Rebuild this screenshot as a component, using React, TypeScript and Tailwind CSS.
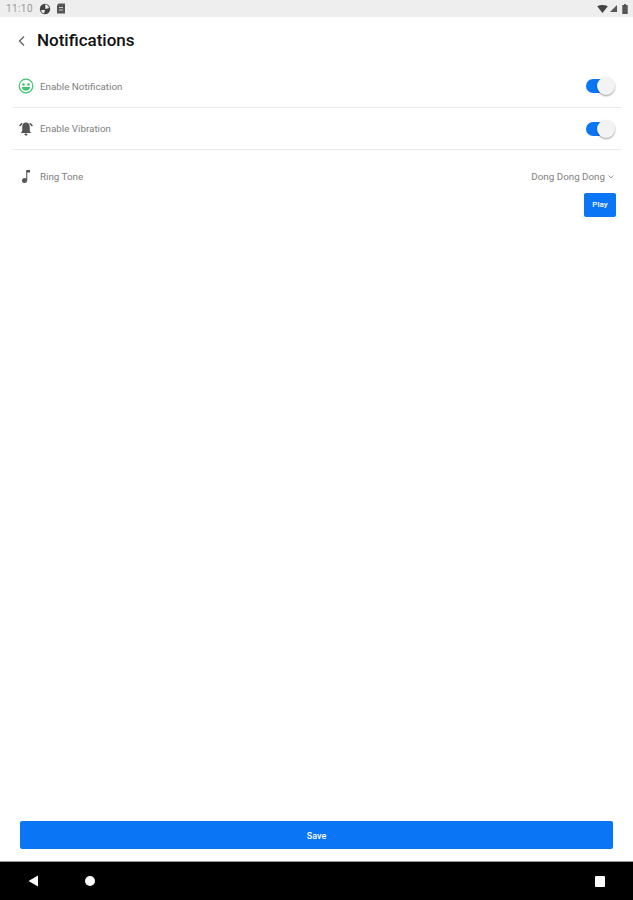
import React from "react";

const Toggle = () => (
  <div className="relative w-[29px] h-[14px]">
    <div className="absolute left-0 top-0 w-[24px] h-[14px] rounded-full bg-[#0a76f6]" />
    <div className="absolute right-0 top-[-2px] w-[18px] h-[18px] rounded-full bg-[#f3f3f3] shadow-[0_1px_2px_rgba(0,0,0,0.4)]" />
  </div>
);

const App = () => {
  return (
    <div className="w-[633px] h-[900px] flex flex-col bg-white font-['Roboto',sans-serif] overflow-hidden">
      {/* Status bar */}
      <div className="h-[17px] bg-[#eeeeee] flex items-center justify-between pl-[6px] pr-[5px] shrink-0">
        <div className="flex items-center">
          <span className="text-[10px] tracking-[0.4px] text-[#9a9a9a]">11:10</span>
          <svg width="12" height="12" viewBox="0 0 12 12" className="ml-[6px]">
            <circle cx="6" cy="6" r="5.2" fill="#444" />
            <path d="M6 1.5 A4.5 4.5 0 0 1 10 5 L6.5 6 Z M3 7 L6 7 L5 10.5 A4.5 4.5 0 0 1 2 7.5 Z" fill="#eee" />
          </svg>
          <svg width="10" height="11" viewBox="0 0 10 11" className="ml-[5px]">
            <path d="M2.5 0.5 H9 V10.5 H1 V2.5 Z" fill="#555" />
            <rect x="3" y="4" width="4" height="1" fill="#ccc" />
            <rect x="3" y="6.5" width="4" height="1" fill="#ccc" />
          </svg>
        </div>
        <div className="flex items-center">
          <svg width="11" height="8" viewBox="0 0 12 9">
            <path d="M0 1.5 Q6 -1.5 12 1.5 L6 9 Z" fill="#444" />
          </svg>
          <svg width="7" height="7" viewBox="0 0 8 8" className="ml-[2px]">
            <path d="M8 0 V8 H0 Z" fill="#555" />
          </svg>
          <svg width="6" height="10" viewBox="0 0 6 11" className="ml-[5px]">
            <path d="M2 0 H4 V1 H6 V11 H0 V1 H2 Z" fill="#555" />
          </svg>
        </div>
      </div>

      {/* Header */}
      <div className="h-[47px] flex items-center pl-[16px] shrink-0">
        <svg width="12" height="14" viewBox="0 0 12 14" fill="none" stroke="#666" strokeWidth="1.4">
          <path d="M8 2.5 L3.5 7 L8 11.5" />
        </svg>
        <h1 className="ml-[9px] text-[17px] font-medium text-[#111] leading-none">Notifications</h1>
      </div>

      {/* Settings rows */}
      <div className="mx-[12px]">
        <div className="h-[44px] flex items-center justify-between border-b border-[#ebebeb] pr-[6px]">
          <div className="flex items-center pl-[6px]">
            <svg width="16" height="16" viewBox="0 0 16 16" fill="none" stroke="#3cc46c" strokeWidth="1.2">
              <circle cx="8" cy="8" r="6.8" />
              <circle cx="5.5" cy="6.5" r="0.7" fill="#3cc46c" />
              <circle cx="10.5" cy="6.5" r="0.7" fill="#3cc46c" />
              <path d="M4.5 9.5 H11.5 Q10.5 12 8 12 Q5.5 12 4.5 9.5 Z" fill="#3cc46c" />
            </svg>
            <span className="ml-[6px] pt-[3px] text-[9.8px] text-[#808080]">Enable Notification</span>
          </div>
          <Toggle />
        </div>
        <div className="h-[42px] flex items-center justify-between border-b border-[#ebebeb] pr-[6px]">
          <div className="flex items-center pl-[6px]">
            <svg width="16" height="16" viewBox="0 0 16 16">
              <path d="M8 1.5 C5.5 1.5 4.2 3.5 4.2 6 V10 L2.8 12 H13.2 L11.8 10 V6 C11.8 3.5 10.5 1.5 8 1.5 Z" fill="#555" />
              <rect x="6.5" y="12.5" width="3" height="2" rx="1" fill="#555" />
              <path d="M4.2 2.2 L1.6 5 M11.8 2.2 L14.4 5" stroke="#555" strokeWidth="1.6" />
            </svg>
            <span className="ml-[6px] pt-[2px] text-[9.8px] text-[#808080]">Enable Vibration</span>
          </div>
          <Toggle />
        </div>

        {/* Ring tone */}
        <div className="h-[52px] flex items-center justify-between pr-[7px]">
          <div className="flex items-center pl-[6px]">
            <svg width="16" height="16" viewBox="0 0 16 16">
              <circle cx="6.5" cy="12.5" r="2.5" fill="#555" />
              <path d="M8.2 12.5 V2 H12 V4.5 H9.3 V12.5 Z" fill="#555" />
            </svg>
            <span className="ml-[6px] pt-[2px] text-[9.8px] text-[#808080]">Ring Tone</span>
          </div>
          <div className="flex items-center gap-[3px] pt-[2px]">
            <span className="text-[9.8px] text-[#808080]">Dong Dong Dong</span>
            <svg width="6" height="4" viewBox="0 0 6 4" fill="none" stroke="#808080" strokeWidth="0.8">
              <path d="M0.5 0.5 L3 3 L5.5 0.5" />
            </svg>
          </div>
        </div>
        <div className="flex justify-end pr-[5px] mt-[-9px]">
          <button className="w-[32px] h-[24px] rounded-[2px] bg-[#0a76f6] text-white text-[8px] font-medium">
            Play
          </button>
        </div>
      </div>

      {/* Save */}
      <div className="mt-auto px-[20px] pb-[12px]">
        <button className="w-full h-[28px] pt-[3px] rounded-[2px] bg-[#0a76f6] text-white text-[9px] font-medium">
          Save
        </button>
      </div>

      {/* Nav bar */}
      <div className="h-[39px] bg-black border-t border-[#999] flex items-center justify-between shrink-0 pl-[28px] pr-[28px]">
        <div className="flex items-center gap-[46px]">
          <svg width="11" height="12" viewBox="0 0 11 12">
            <path d="M10 0.5 V11.5 L0.5 6 Z" fill="#fff" />
          </svg>
          <div className="w-[10px] h-[10px] rounded-full bg-white" />
        </div>
        <div className="w-[10px] h-[11px] rounded-[1px] bg-white" />
      </div>
    </div>
  );
};

export default App;
